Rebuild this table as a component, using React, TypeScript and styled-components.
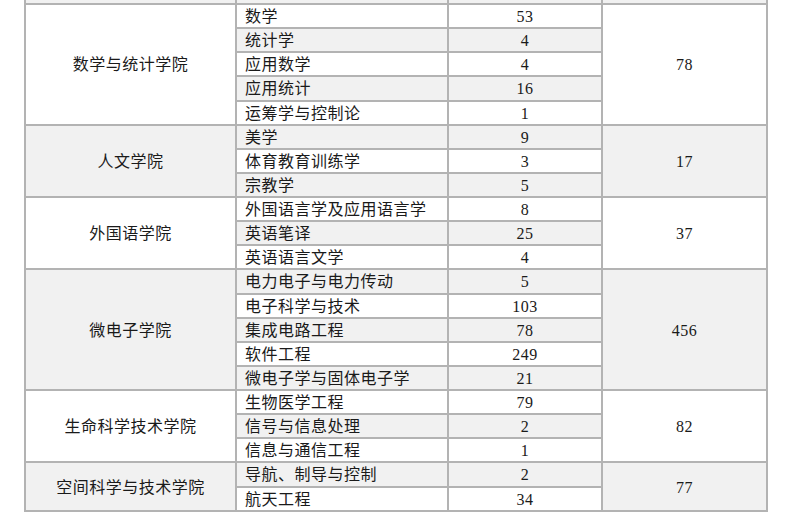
import * as React from 'react';
import styled, { createGlobalStyle } from 'styled-components';

const GlobalStyle = createGlobalStyle`
	html, body {
		margin: 0;
		padding: 0;
		background: #ffffff;
	}
	body {
		font-family: 'Liberation Serif', 'Noto Sans CJK SC', serif;
		color: #1a1a1a;
	}
`;

const Page = styled.div`
	padding: 0 0 0 24px;
	width: 786px;
	height: 526px;
	box-sizing: border-box;
	overflow: hidden;
`;

const Table = styled.table`
	border-collapse: collapse;
	table-layout: fixed;
	width: 742px;
	font-size: 16px;

	tbody tr:nth-child(odd) {
		background-color: #f1f1f1;
	}
	tbody tr:nth-child(even) {
		background-color: #ffffff;
	}
`;

const Row = styled.tr`
	height: 24.14px;
`;

const Cell = styled.td<{ $align?: 'left' | 'center' }>`
	border: 2px solid #b3b3b3;
	padding: 2px 8px 0;
	line-height: 20px;
	letter-spacing: 0.5px;
	text-align: ${p => p.$align ?? 'center'};
	vertical-align: middle;
	white-space: nowrap;
`;

const StubCell = styled.td`
	border: 2px solid #b3b3b3;
	border-top: none;
	height: 3px;
	padding: 0;
`;

interface Major {
	name: string;
	count: number;
}

interface College {
	name: string;
	total: number;
	majors: Major[];
}

const colleges: College[] = [
	{
		name: '数学与统计学院',
		total: 78,
		majors: [
			{ name: '数学', count: 53 },
			{ name: '统计学', count: 4 },
			{ name: '应用数学', count: 4 },
			{ name: '应用统计', count: 16 },
			{ name: '运筹学与控制论', count: 1 },
		],
	},
	{
		name: '人文学院',
		total: 17,
		majors: [
			{ name: '美学', count: 9 },
			{ name: '体育教育训练学', count: 3 },
			{ name: '宗教学', count: 5 },
		],
	},
	{
		name: '外国语学院',
		total: 37,
		majors: [
			{ name: '外国语言学及应用语言学', count: 8 },
			{ name: '英语笔译', count: 25 },
			{ name: '英语语言文学', count: 4 },
		],
	},
	{
		name: '微电子学院',
		total: 456,
		majors: [
			{ name: '电力电子与电力传动', count: 5 },
			{ name: '电子科学与技术', count: 103 },
			{ name: '集成电路工程', count: 78 },
			{ name: '软件工程', count: 249 },
			{ name: '微电子学与固体电子学', count: 21 },
		],
	},
	{
		name: '生命科学技术学院',
		total: 82,
		majors: [
			{ name: '生物医学工程', count: 79 },
			{ name: '信号与信息处理', count: 2 },
			{ name: '信息与通信工程', count: 1 },
		],
	},
	{
		name: '空间科学与技术学院',
		total: 77,
		majors: [
			{ name: '导航、制导与控制', count: 2 },
			{ name: '航天工程', count: 34 },
		],
	},
];

const App: React.FC = () => {
	return (
		<Page>
			<GlobalStyle />
			<Table>
				<colgroup>
					<col style={{ width: 211 }} />
					<col style={{ width: 212 }} />
					<col style={{ width: 154 }} />
					<col style={{ width: 165 }} />
				</colgroup>
				<tbody>
					{/* tail of the row above, cut off by the viewport */}
					<tr>
						<StubCell />
						<StubCell />
						<StubCell />
						<StubCell />
					</tr>
					{colleges.map(college =>
						college.majors.map((major, i) => (
							<Row key={college.name + major.name}>
								{i === 0 && <Cell rowSpan={college.majors.length}>{college.name}</Cell>}
								<Cell $align="left">{major.name}</Cell>
								<Cell>{major.count}</Cell>
								{i === 0 && <Cell rowSpan={college.majors.length}>{college.total}</Cell>}
							</Row>
						)),
					)}
				</tbody>
			</Table>
		</Page>
	);
};

export default App;
